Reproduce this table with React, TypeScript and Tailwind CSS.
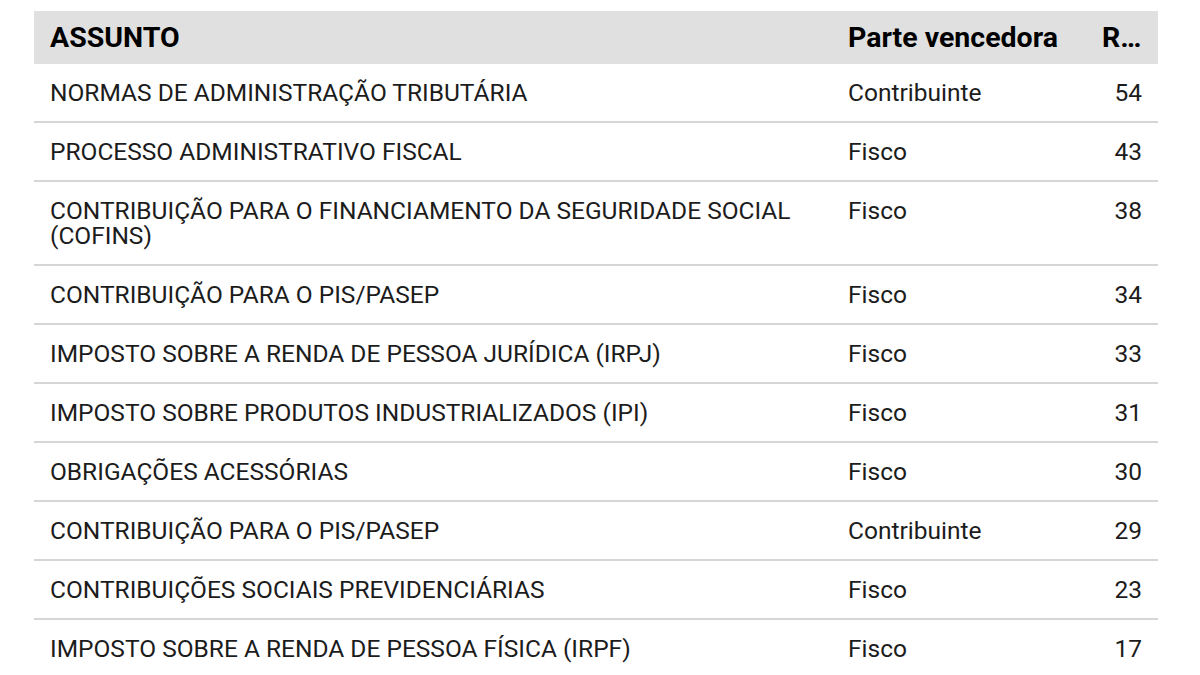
const ROWS = [
  { assunto: 'NORMAS DE ADMINISTRAÇÃO TRIBUTÁRIA', parte: 'Contribuinte', total: 54 },
  { assunto: 'PROCESSO ADMINISTRATIVO FISCAL', parte: 'Fisco', total: 43 },
  { assunto: 'CONTRIBUIÇÃO PARA O FINANCIAMENTO DA SEGURIDADE SOCIAL (COFINS)', parte: 'Fisco', total: 38 },
  { assunto: 'CONTRIBUIÇÃO PARA O PIS/PASEP', parte: 'Fisco', total: 34 },
  { assunto: 'IMPOSTO SOBRE A RENDA DE PESSOA JURÍDICA (IRPJ)', parte: 'Fisco', total: 33 },
  { assunto: 'IMPOSTO SOBRE PRODUTOS INDUSTRIALIZADOS (IPI)', parte: 'Fisco', total: 31 },
  { assunto: 'OBRIGAÇÕES ACESSÓRIAS', parte: 'Fisco', total: 30 },
  { assunto: 'CONTRIBUIÇÃO PARA O PIS/PASEP', parte: 'Contribuinte', total: 29 },
  { assunto: 'CONTRIBUIÇÕES SOCIAIS PREVIDENCIÁRIAS', parte: 'Fisco', total: 23 },
  { assunto: 'IMPOSTO SOBRE A RENDA DE PESSOA FÍSICA (IRPF)', parte: 'Fisco', total: 17 },
];

export default function App() {
  return (
    <div className="min-h-screen bg-white pl-[34px] pt-[11px] font-['Roboto',sans-serif] text-[#1c1c1c]">
      <table className="w-[1124px] table-fixed border-collapse">
        <colgroup>
          <col className="w-[798px]" />
          <col className="w-[254px]" />
          <col className="w-[72px]" />
        </colgroup>
        <thead>
          <tr className="h-[53px] bg-[#e0e0e0] text-left text-[28.5px] font-bold leading-[32px] text-black">
            <th className="px-4 align-middle">ASSUNTO</th>
            <th className="px-4 align-middle">Parte vencedora</th>
            <th className="whitespace-nowrap px-4 align-middle">R…</th>
          </tr>
        </thead>
        <tbody>
          {ROWS.map((row, i) => (
            <tr key={i} className="border-b-2 border-[#d6d6d6] text-[24.5px] leading-[25px]">
              <td className="px-4 pt-4 pb-4 align-top">{row.assunto}</td>
              <td className="px-4 pt-4 pb-4 align-top">{row.parte}</td>
              <td className="px-4 pt-4 pb-4 text-right align-top">{row.total}</td>
            </tr>
          ))}
        </tbody>
      </table>
    </div>
  );
}
